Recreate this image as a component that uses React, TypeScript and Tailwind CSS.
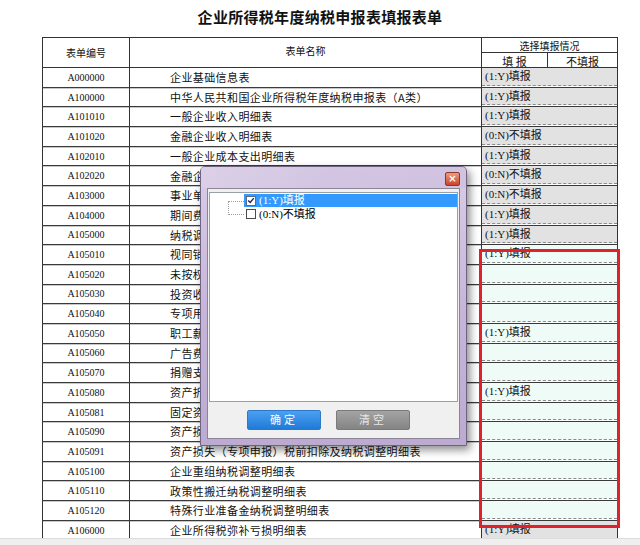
import React from "react";

type Row = { code: string; name: string; value: string; marked?: boolean };

const rows: Row[] = [
  { code: "A000000", name: "企业基础信息表", value: "(1:Y)填报" },
  { code: "A100000", name: "中华人民共和国企业所得税年度纳税申报表（A类）", value: "(1:Y)填报" },
  { code: "A101010", name: "一般企业收入明细表", value: "(1:Y)填报" },
  { code: "A101020", name: "金融企业收入明细表", value: "(0:N)不填报" },
  { code: "A102010", name: "一般企业成本支出明细表", value: "(1:Y)填报" },
  { code: "A102020", name: "金融企业支出明细表", value: "(0:N)不填报" },
  { code: "A103000", name: "事业单位、民间非营利组织收入、支出明细表", value: "(0:N)不填报" },
  { code: "A104000", name: "期间费用明细表", value: "(1:Y)填报" },
  { code: "A105000", name: "纳税调整项目明细表", value: "(1:Y)填报" },
  { code: "A105010", name: "视同销售和房地产开发企业特定业务纳税调整明细表", value: "(1:Y)填报", marked: true },
  { code: "A105020", name: "未按权责发生制确认收入纳税调整明细表", value: "", marked: true },
  { code: "A105030", name: "投资收益纳税调整明细表", value: "", marked: true },
  { code: "A105040", name: "专项用途财政性资金纳税调整明细表", value: "", marked: true },
  { code: "A105050", name: "职工薪酬纳税调整明细表", value: "(1:Y)填报", marked: true },
  { code: "A105060", name: "广告费和业务宣传费跨年度纳税调整明细表", value: "", marked: true },
  { code: "A105070", name: "捐赠支出纳税调整明细表", value: "", marked: true },
  { code: "A105080", name: "资产折旧、摊销情况及纳税调整明细表", value: "(1:Y)填报", marked: true },
  { code: "A105081", name: "固定资产加速折旧、扣除明细表", value: "", marked: true },
  { code: "A105090", name: "资产损失税前扣除及纳税调整明细表", value: "", marked: true },
  { code: "A105091", name: "资产损失（专项申报）税前扣除及纳税调整明细表", value: "", marked: true },
  { code: "A105100", name: "企业重组纳税调整明细表", value: "", marked: true },
  { code: "A105110", name: "政策性搬迁纳税调整明细表", value: "", marked: true },
  { code: "A105120", name: "特殊行业准备金纳税调整明细表", value: "", marked: true },
  { code: "A106000", name: "企业所得税弥补亏损明细表", value: "(1:Y)填报" },
];

const cjk = "font-['Noto_Sans_CJK_SC',sans-serif]";
const mixed = "font-['Liberation_Serif','Noto_Sans_CJK_SC',serif]";

function Dialog() {
  return (
    <div className="absolute left-[200px] top-[166px] w-[267px] h-[280px] rounded-t-[5px] border border-[#6f6480] bg-gradient-to-b from-[#d9cde6] via-[#c7b6da] to-[#bcaad0] shadow-[3px_4px_8px_rgba(0,0,0,0.45)] flex flex-col">
      {/* title bar */}
      <div className="h-[21px] flex items-center justify-end pr-[6px] bg-gradient-to-r from-[#ddd3e8]/60 via-[#cbbbdd]/40 to-[#c0aed4]/30">
        <div className="w-[15px] h-[14px] mt-[3px] rounded-[2px] border border-[#8a3a28] bg-gradient-to-b from-[#ee9a7e] to-[#c9432a] flex items-center justify-center text-white text-[10px] leading-none font-bold font-['DejaVu_Sans',sans-serif]">
          ×
        </div>
      </div>
      <div className="flex-1 mx-[6px] mb-[6px] bg-[#f0f0f0] border border-[#8c8496] flex flex-col">
        <div className="h-[210px] m-[1px] mt-[3px] bg-white border border-[#9aa0a8] relative pt-[1px]">
          {/* tree lines */}
          <div className="absolute left-[18px] top-[8px] w-[16px] h-[14px] border-l border-t border-b border-dotted border-[#a0a0a0]" />
          <div className={`ml-[34px] h-[13px] flex items-center bg-[#3399ff] text-white text-[11px] ${mixed}`}>
            <span className="ml-[2px] w-[10px] h-[10px] bg-white border border-[#5a6a80] flex items-center justify-center mr-[3px]">
              <svg viewBox="0 0 10 10" className="w-[9px] h-[9px]">
                <path d="M1.5 5 L4 7.5 L8.5 2" fill="none" stroke="#1a2a55" strokeWidth="1.8" />
              </svg>
            </span>
            (1:Y)填报
          </div>
          <div className={`ml-[34px] h-[14px] flex items-center text-black text-[11px] ${mixed}`}>
            <span className="ml-[2px] w-[10px] h-[10px] bg-white border border-[#4a4a4a] mr-[3px]" />
            (0:N)不填报
          </div>
        </div>
        <div className="flex-1 flex items-center pl-[39px] gap-[15px] pb-[2px]">
          <div className={`w-[74px] h-[20px] rounded-[2px] border border-[#2f78c8] bg-gradient-to-b from-[#4aa0f0] to-[#1f7ad8] text-white text-[11px] flex items-center justify-center tracking-[3px] ${cjk}`}>
            确定
          </div>
          <div className={`w-[74px] h-[20px] rounded-[2px] border border-[#7a7a7a] bg-gradient-to-b from-[#a4a4a4] to-[#848484] text-[#e8e8e8] text-[11px] flex items-center justify-center tracking-[3px] ${cjk}`}>
            清空
          </div>
        </div>
      </div>
    </div>
  );
}

export default function App() {
  return (
    <div className="relative w-[640px] h-[545px] overflow-hidden bg-white text-[#111]">
      <div className={`h-[37px] pt-[7px] text-center text-[15px] leading-[20px] font-bold tracking-[0.3px] ${cjk}`}>
        企业所得税年度纳税申报表填报表单
      </div>

      <div className="ml-[42px] w-[576px]">
        {/* header */}
        <div className={`flex h-[31px] border-t border-b border-[#333] text-[10px] ${cjk}`}>
          <div className="w-[87px] border-l border-[#333] flex items-center justify-center">表单编号</div>
          <div className="w-[352px] border-l border-[#333] flex items-center justify-center pb-[4px]">表单名称</div>
          <div className="w-[137px] border-l border-r border-[#333] flex flex-col">
            <div className="h-[15px] border-b border-[#333] flex items-center justify-center">选择填报情况</div>
            <div className="flex-1 flex">
              <div className="w-[66px] border-r border-[#333] flex items-center justify-center text-[11px]">填 报</div>
              <div className="flex-1 flex items-center justify-center text-[11px]">不填报</div>
            </div>
          </div>
        </div>

        {rows.map((r) => (
          <div key={r.code} className="flex h-[19.7px] border-b border-[#3a3a3a] shadow-[0_1px_0_#c8c8c8]">
            <div className="w-[87px] border-l border-[#333] flex items-center justify-center text-[10px] font-['Liberation_Serif',serif]">
              {r.code}
            </div>
            <div className={`w-[352px] border-l border-[#333] flex items-center pl-[40px] text-[11px] tracking-[0.4px] whitespace-nowrap overflow-hidden ${cjk}`}>
              {r.name}
            </div>
            <div className="w-[137px] border-l border-r border-[#333] flex flex-col">
              <div
                className={`flex-1 mb-[1px] border-b border-dashed border-[#8a8a8a] pl-[3px] text-[11px] leading-[16px] whitespace-nowrap ${mixed} ${
                  r.marked ? "bg-[#effbf6]" : "bg-[#e2e2e2]"
                }`}
              >
                {r.value}
              </div>
            </div>
          </div>
        ))}
      </div>

      {/* red annotation box */}
      <div className="absolute left-[479px] top-[249px] w-[141px] h-[279px] border-[3px] border-[#e0202a]" />

      <Dialog />

      {/* bottom strip */}
      <div className="absolute left-0 right-0 top-[538px] h-[7px] bg-[#efefef] border-t border-[#dcdcdc]" />
    </div>
  );
}
